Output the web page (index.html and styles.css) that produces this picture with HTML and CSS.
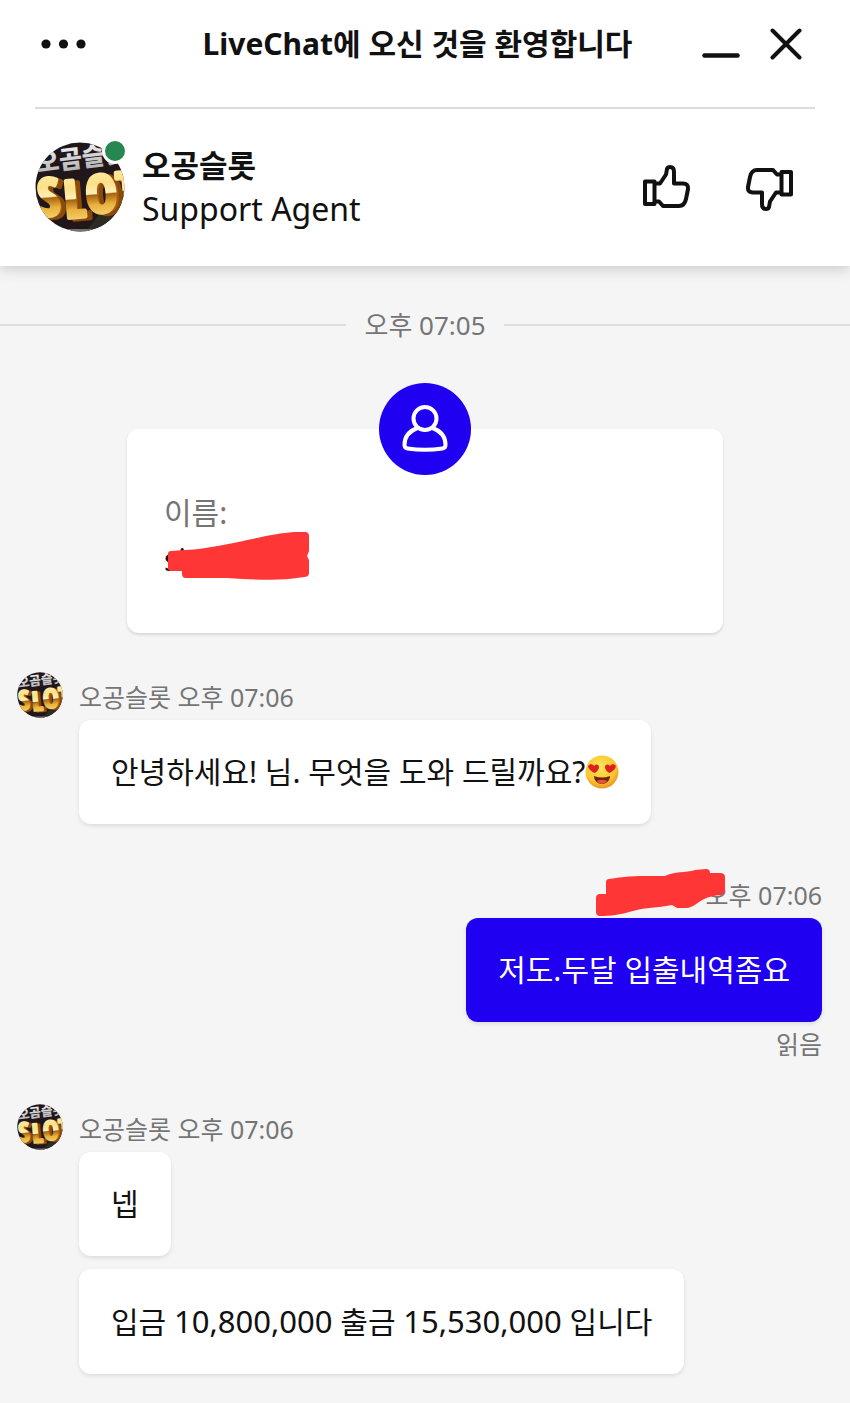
FILE: index.html
```html
<!DOCTYPE html>
<html lang="ko">
<head>
<meta charset="utf-8">
<meta name="viewport" content="width=device-width, initial-scale=1">
<title>LiveChat</title>
<link rel="stylesheet" href="styles.css">
</head>
<body>
<svg class="defs" aria-hidden="true">
  <defs>
    <linearGradient id="gold" x1="0" y1="0" x2="0" y2="1">
      <stop offset="0" stop-color="#fff3b5"/>
      <stop offset=".38" stop-color="#fbe08a"/>
      <stop offset=".52" stop-color="#fff0b8"/>
      <stop offset=".54" stop-color="#a8630f"/>
      <stop offset=".68" stop-color="#e9b23c"/>
      <stop offset="1" stop-color="#fff0a5"/>
    </linearGradient>
    <linearGradient id="silver" x1="0" y1="0" x2="0" y2="1">
      <stop offset="0" stop-color="#ffffff"/>
      <stop offset="1" stop-color="#a9a9ad"/>
    </linearGradient>
    <clipPath id="round"><circle cx="45" cy="45" r="44.5"/></clipPath>
    <radialGradient id="face" cx=".45" cy=".35" r=".7">
      <stop offset="0" stop-color="#ffe55c"/>
      <stop offset=".65" stop-color="#fcc62f"/>
      <stop offset="1" stop-color="#e8862a"/>
    </radialGradient>
    <symbol id="brand" viewBox="0 0 90 90">
      <g clip-path="url(#round)">
        <rect width="90" height="90" fill="#21171a"/>
        <path d="M50 90 76 58 90 62V90Z" fill="#2d2b22"/>
        <path d="M0 87H90V90H0Z" fill="#77716f"/>
        <g transform="rotate(-7 45 25)">
          <text class="brand-top" x="2" y="25">오곰슬롯</text>
        </g>
        <g transform="rotate(-5 45 55)">
          <g class="brand-side">
            <text x="8" y="73">S</text><text x="34" y="77">L</text><text x="57" y="74">O</text><text x="87" y="73">T</text>
          </g>
          <g class="brand-face">
            <text x="3" y="71">S</text><text x="29" y="75">L</text><text x="51" y="72">O</text><text x="82" y="71">T</text>
          </g>
        </g>
      </g>
    </symbol>
    <symbol id="thumb" viewBox="0 0 48 46">
      <path d="M2 16.500H11.500V39H2ZM12 18.500H17L23 9.500 24 4Q24.500 2 27 2C30 2 31 4 31 7V18.500H40Q45.500 18.500 45 24L43 34Q41.500 41 36 41H20L16 36.500H12" fill="none" stroke="#111" stroke-width="4" stroke-linejoin="round"/>
    </symbol>
  </defs>
</svg>

<header class="header">
  <div class="titlebar">
    <button class="icon-button" aria-label="메뉴">
      <svg width="46" height="12" viewBox="0 0 46 12" fill="#111"><circle cx="5" cy="6" r="4.600"/><circle cx="22.500" cy="6" r="4.600"/><circle cx="40" cy="6" r="4.600"/></svg>
    </button>
    <h1 class="title">LiveChat에 오신 것을 환영합니다</h1>
    <div class="window-actions">
      <button class="icon-button" aria-label="최소화">
        <svg width="38" height="32" viewBox="0 0 38 32"><path d="M2.500 27.500H35.500" stroke="#111" stroke-width="4.500" stroke-linecap="round"/></svg>
      </button>
      <button class="icon-button" aria-label="닫기">
        <svg width="32" height="32" viewBox="0 0 32 32"><path d="M2.500 2.500 29.500 29.500M29.500 2.500 2.500 29.500" stroke="#111" stroke-width="4" stroke-linecap="round"/></svg>
      </button>
    </div>
  </div>
  <div class="agent">
    <div class="agent-avatar">
      <svg class="avatar-large" role="img" aria-label="오공슬롯"><use href="#brand"/></svg>
      <span class="online"></span>
    </div>
    <div class="agent-info">
      <strong>오공슬롯</strong>
      <span>Support Agent</span>
    </div>
    <div class="rating">
      <button class="icon-button" aria-label="좋아요"><svg width="48" height="46"><use href="#thumb"/></svg></button>
      <button class="icon-button" aria-label="싫어요"><svg class="down" width="48" height="46"><use href="#thumb"/></svg></button>
    </div>
  </div>
</header>

<main class="chat">
  <div class="divider"><time>오후 07:05</time></div>

  <section class="card">
    <span class="card-badge">
      <svg width="46" height="48" viewBox="0 0 46 48" fill="none" stroke="#fff" stroke-width="4"><circle cx="23" cy="13.500" r="11.500"/><path d="M15.500 23C7 26 2.500 31.500 2.500 40Q2.500 43 5.500 43.500C17 45.300 29 45.300 40.500 43.500Q43.500 43 43.500 40C43.500 31.500 39 26 30.500 23"/></svg>
    </span>
    <dl class="field">
      <dt>이름:</dt>
      <dd>si
        <svg class="mark mark-name" width="144" height="50" viewBox="0 0 144 50"><path d="M4 20 18 19C55 17 98 3 127 1L138 1Q142 1 142 5V20L140 25 142 29V42Q142 46 137 46C113 50 93 49 60 47L19 47Q15 47 15 43V40H4Q1 40 1 37V23Q1 20 4 20Z" fill="#ff3636"/></svg>
      </dd>
    </dl>
  </section>

  <article class="message first">
    <svg class="avatar-small" role="img" aria-label="오공슬롯"><use href="#brand"/></svg>
    <div class="stack">
      <p class="meta">오공슬롯 오후 07:06</p>
      <p class="bubble">안녕하세요! 님. 무엇을 도와 드릴까요?<svg class="emoji" viewBox="0 0 34 34" role="img" aria-label="하트 눈 얼굴"><circle cx="17" cy="17" r="16.500" fill="url(#face)"/><path d="M9 21Q17 24 25 21C25 25 22 29 17 29S9 25 9 21Z" fill="#6a260e"/><path d="M11.500 26Q17 23.500 22.500 26 20 29 17 29T11.500 26Z" fill="#e85035"/><path id="heart" d="M9.500 18C4 15 2.500 12 3.500 10.500 5 8.500 8 9 9 11 10.500 8.500 14 9 14 12 14 14.500 12 17 9.500 18Z" fill="#d9231c"/><use href="#heart" transform="matrix(-1 0 0 1 34 0)"/></svg></p>
    </div>
  </article>

  <article class="message own">
    <div class="stack">
      <p class="meta">오후 07:06
        <svg class="mark mark-author" width="131" height="48" viewBox="0 0 131 48"><path d="M5 25H11V13Q11 10 14 10C35 6 55 7 70 7 79 2 91 4 100 1L111 0Q115 0 115 4L125 4Q130 4 130 8V22Q130 25 126 26C111 27 106 32 98 37Q94 39 92 39H82L77 36C61 39 52 38 38 42 25 46 15 47 5 47Q1 47 1 43V29Q1 25 5 25Z" fill="#ff3636"/></svg>
      </p>
      <p class="bubble">저도.두달 입출내역좀요</p>
      <p class="meta receipt">읽음</p>
    </div>
  </article>

  <article class="message">
    <svg class="avatar-small" role="img" aria-label="오공슬롯"><use href="#brand"/></svg>
    <div class="stack">
      <p class="meta">오공슬롯 오후 07:06</p>
      <p class="bubble">넵</p>
      <p class="bubble"><span>입금 <span class="amount">10,800,000</span> 출금 <span class="amount">15,530,000</span> 입니다</span></p>
    </div>
  </article>
</main>
</body>
</html>
```
FILE: styles.css
```css
* { box-sizing: border-box; }
body {
  margin: 0;
  min-height: 100vh;
  background: #f5f5f5;
  color: #111;
  font: 30px/44px "Noto Sans", "Noto Sans CJK KR", sans-serif;
}
h1, p, dl, dd { margin: 0; }
svg { display: block; flex: none; }
.defs { position: absolute; width: 0; height: 0; }

.header {
  position: relative;
  padding: 0 35px;
  background: #fff;
  box-shadow: 0 2px 14px rgba(0, 0, 0, .2);
}
.titlebar {
  display: flex;
  align-items: center;
  justify-content: space-between;
  padding: 22px 13px 41px 6px;
  border-bottom: 2px solid #dcdcdc;
}
.title { font-size: 30px; line-height: 44px; font-weight: 700; padding-left: 46px; }
.icon-button { padding: 0; border: 0; background: none; color: inherit; cursor: pointer; }
.window-actions { display: flex; gap: 30px; }

.agent {
  display: flex;
  align-items: center;
  gap: 17px;
  padding: 33px 22px 34px 0;
}
.agent-avatar { position: relative; }
.avatar-large { width: 90px; height: 90px; }
.online {
  position: absolute;
  top: -4px;
  right: -3px;
  width: 26px;
  height: 26px;
  border: 3px solid #fff;
  border-radius: 50%;
  background: #268750;
}
.agent-info { display: flex; flex-direction: column; flex: 1; font-size: 32px; }
.agent-info strong { font-size: 31px; }
.rating { display: flex; gap: 54px; padding-top: 2px; }
.down { transform: rotate(180deg); }

.divider {
  display: flex;
  align-items: center;
  gap: 18px;
  padding-top: 37px;
  color: #757575;
  font-size: 26px;
}
.divider::before, .divider::after { content: ""; flex: 1; height: 2px; background: #dedede; }

.card {
  position: relative;
  margin: 82px 127px 42px;
  padding: 60px 37px 50px;
  border-radius: 12px;
  background: #fff;
  box-shadow: 0 2px 3px rgba(0, 0, 0, .12);
}
.card-badge {
  position: absolute;
  top: -46px;
  left: 50%;
  display: grid;
  place-items: center;
  width: 92px;
  height: 92px;
  margin-left: -46px;
  border-radius: 50%;
  background: #2000f0;
}
.field { line-height: 47px; }
.field dt { color: #757575; }
.field dd { position: relative; }
.mark { position: absolute; }
.mark-name { left: 3px; top: -5px; }

.message {
  display: flex;
  align-items: flex-start;
  gap: 16px;
  padding: 0 28px 0 17px;
  margin-top: 40px;
}
.message.first { margin-top: 0; }
.avatar-small { width: 46px; height: 46px; margin-top: -3px; }
.stack { display: flex; flex-direction: column; align-items: flex-start; }
.meta { position: relative; color: #757575; font-size: 25px; padding-bottom: 1px; }
.bubble {
  display: flex;
  align-items: center;
  padding: 30px 32px;
  border-radius: 12px;
  background: #fff;
  box-shadow: 0 2px 4px rgba(0, 0, 0, .1);
}
.bubble + .bubble { margin-top: 13px; }
.amount { font-size: 31px; }
.emoji { width: 34px; height: 34px; }
.own { justify-content: flex-end; margin-top: 49px; }
.own .stack { align-items: flex-end; }
.own .bubble { background: #2000f0; color: #fff; }
.mark-author { right: 96px; top: -4px; }

.brand-top { font: 900 25px "Noto Sans CJK KR", sans-serif; fill: url(#silver); }
.brand-face, .brand-side { font: 700 52px "Liberation Sans Narrow", "Open Sans Condensed", "Noto Sans", sans-serif; stroke-width: 4px; stroke-linejoin: round; }
.brand-face { fill: url(#gold); stroke: url(#gold); }
.brand-side { fill: #a85e12; stroke: #8a4a0c; }
```
